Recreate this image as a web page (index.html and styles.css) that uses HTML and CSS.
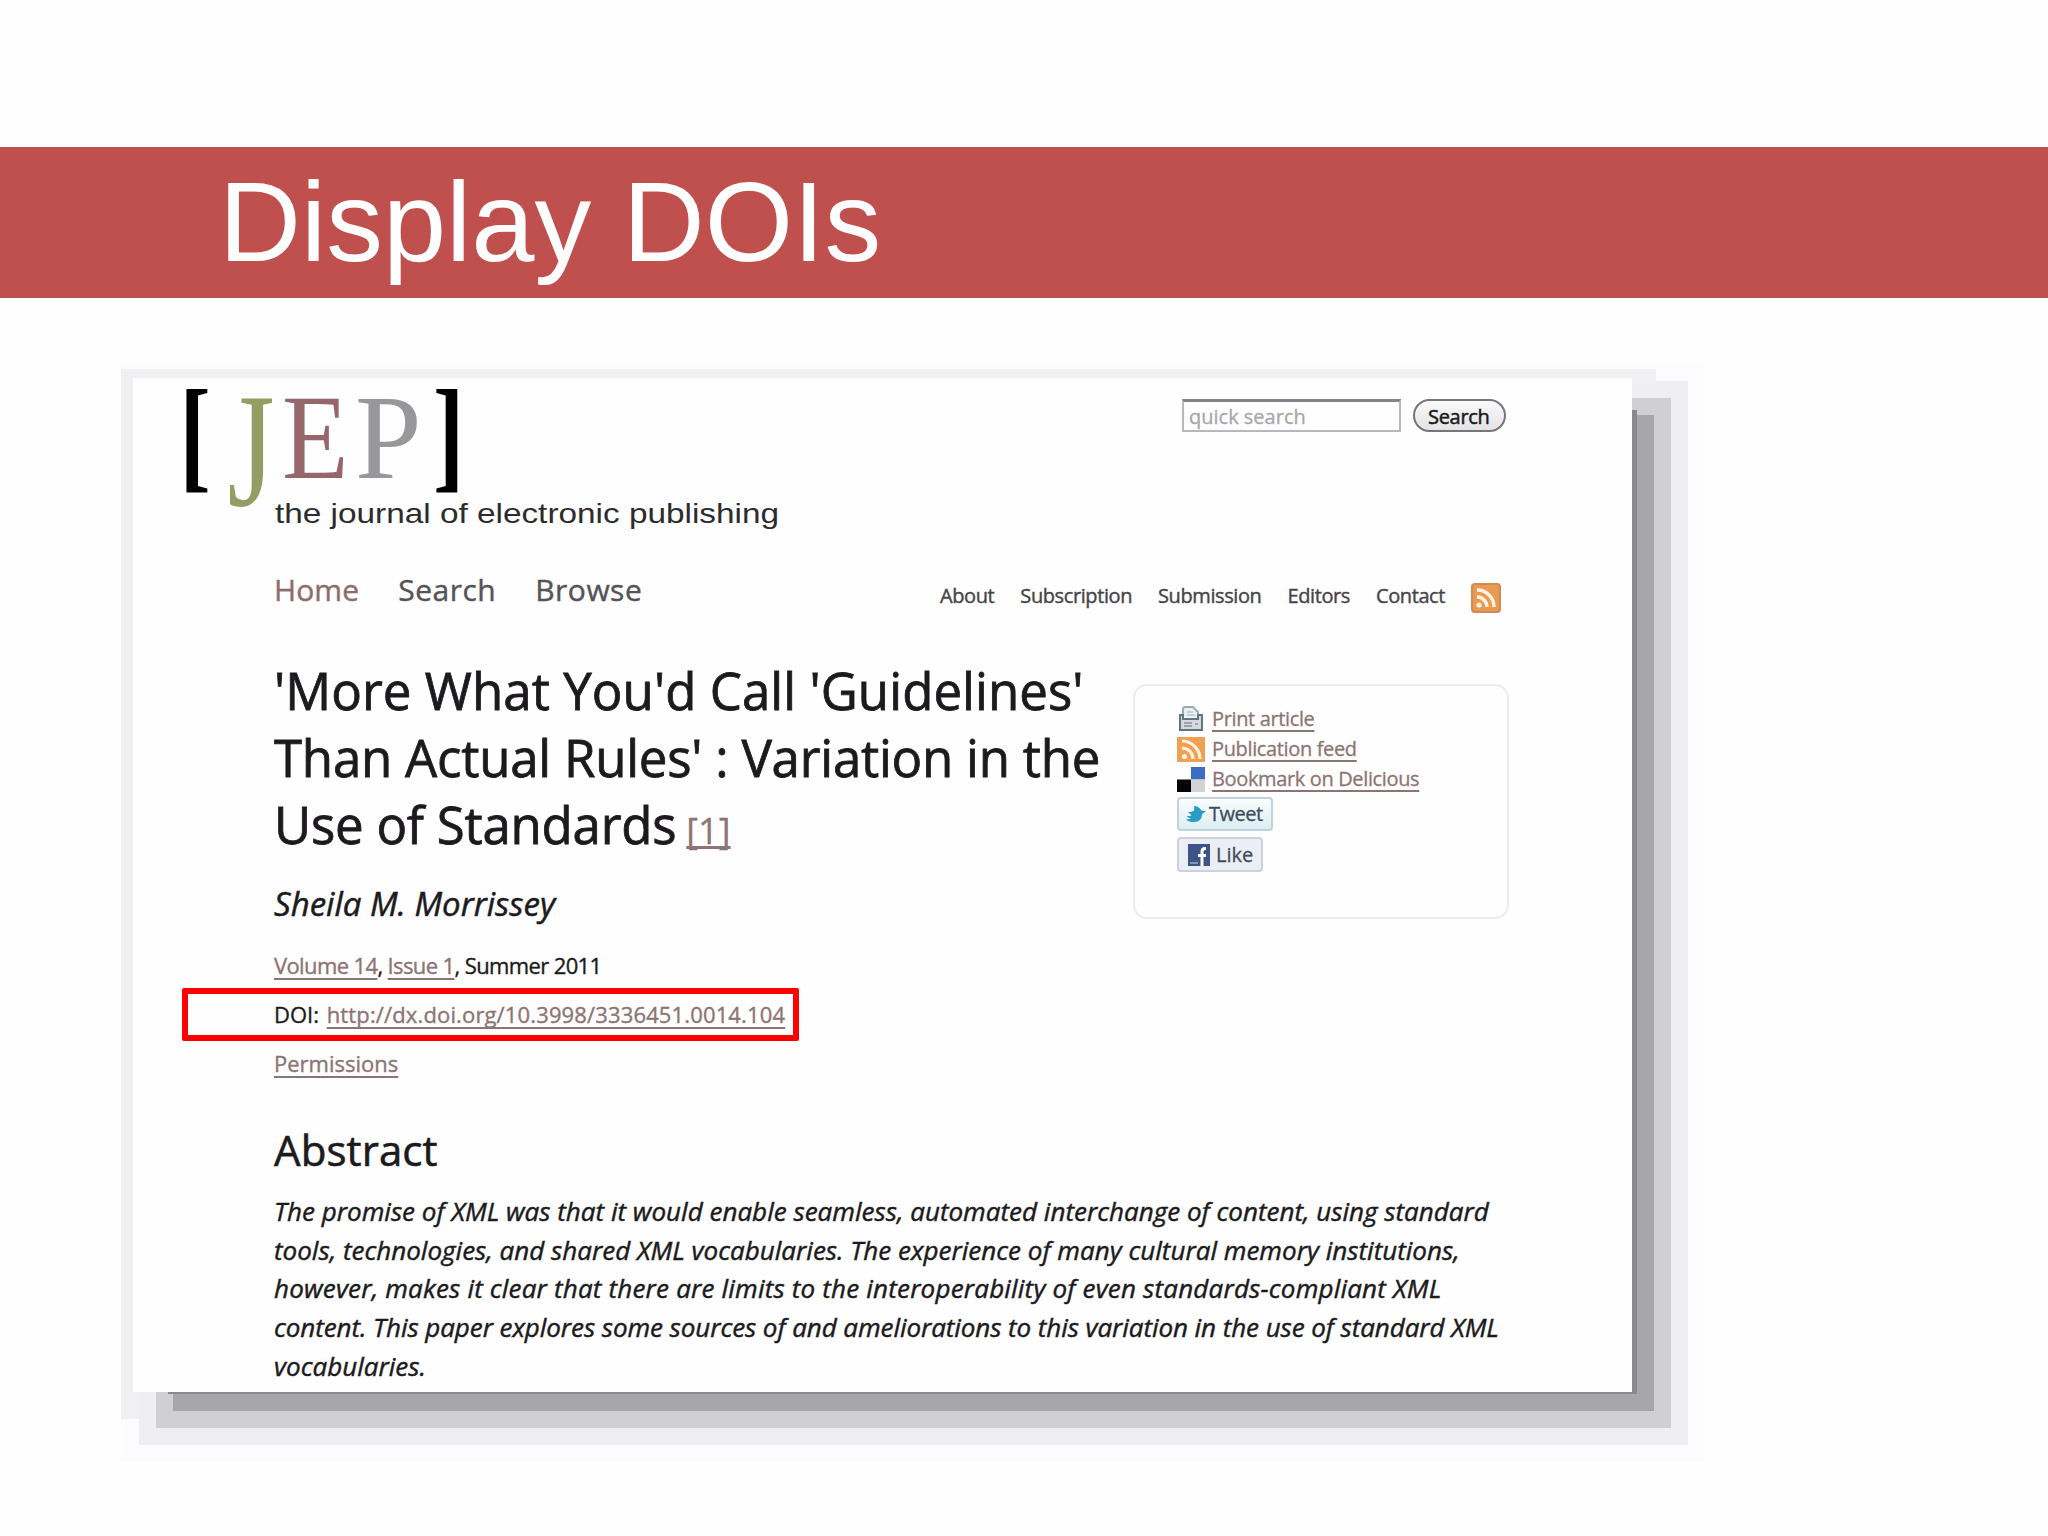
FILE: index.html
```html
<!DOCTYPE html>
<html lang="en">
<head>
<meta charset="utf-8">
<title>Display DOIs</title>
<link rel="stylesheet" href="styles.css">
</head>
<body>
<header class="banner"><h1>Display DOIs</h1></header>
<main class="card">
  <div class="top">
    <svg class="logo" width="610" height="160" viewBox="180 380 610 160" role="img">
      <g font-family="Liberation Serif, serif">
        <text transform="translate(179.500 475.500) scale(.75 1)" font-size="125" font-weight="700">[</text>
        <text transform="translate(433 475.500) scale(.75 1)" font-size="125" font-weight="700">]</text>
        <text transform="translate(227.500 505) scale(1 1.34)" font-size="121" fill="#939e64">J</text>
        <text transform="translate(282 478) scale(.9 1)" font-size="121" fill="#97666a">E</text>
        <text transform="translate(355 478) scale(.99 1)" font-size="121" fill="#98979a">P</text>
      </g>
      <text x="275" y="523" font-family="Liberation Sans, sans-serif" font-size="28" textLength="504" lengthAdjust="spacingAndGlyphs" fill="#2d2b2e">the journal of electronic publishing</text>
    </svg>
    <form class="search">
      <div class="field">quick search</div>
      <div class="button">Search</div>
    </form>
  </div>
  <nav class="nav">
    <div class="main-nav"><a class="home">Home</a><a>Search</a><a>Browse</a></div>
    <div class="sub-nav">
      <a>About</a><a>Subscription</a><a>Submission</a><a>Editors</a><a>Contact</a>
      <svg class="rss" width="30" height="30" viewBox="0 0 30 30"><rect x="1" y="1" width="28" height="28" rx="3" fill="#e99a50" stroke="#cf8a55" stroke-width="2"/><path d="M6 14a10 10 0 0 1 10 10M6 7a17 17 0 0 1 17 17" fill="none" stroke="#fff3e2" stroke-width="3.400"/><circle cx="8" cy="22" r="2.600" fill="#fff3e2"/></svg>
    </div>
  </nav>
  <div class="intro">
    <article>
      <h2>'More What You'd Call 'Guidelines'<br><span class="tight">Than Actual Rules' : Variation in the</span><br><span class="tight">Use of Standards</span><a class="note">[1]</a></h2>
      <p class="author">Sheila M. Morrissey</p>
      <p class="meta issue"><a>Volume 14</a>, <a>Issue 1</a>, Summer 2011</p>
      <p class="meta">DOI: <a class="doi">http://dx.doi.org/10.3998/3336451.0014.104</a></p>
      <p class="meta"><a>Permissions</a></p>
    </article>
    <aside class="share">
      <div class="row"><svg width="28" height="26" viewBox="-1 0 28 26"><path d="M5 11V3q0-2 2-2h8l5 5v6" fill="#e8f0f4" stroke="#9aabb4" stroke-width="2"/><path d="M9 6h6M9 9h8" stroke="#c3d3dc" stroke-width="2"/><path d="M2 9h3v4h15V9h4v15H2z" fill="#d3dadd" stroke="#62747e" stroke-width="2"/><path d="M6 17h8M6 20h8M17 18h3" stroke="#9aa5ab" stroke-width="2"/></svg><a>Print article</a></div>
      <div class="row"><svg width="28" height="26" viewBox="0 0 28 26"><rect y="1" width="28" height="25" fill="#efa052"/><path d="M5 12a11 11 0 0 1 11 11M5 5a18 18 0 0 1 18 18" fill="none" stroke="#fff1dc" stroke-width="3.200"/><circle cx="7.500" cy="20.500" r="2.600" fill="#fff1dc"/></svg><a>Publication feed</a></div>
      <div class="row"><svg width="28" height="25" viewBox="0 0 28 25"><path d="M14 0h14v12.500H14z" fill="#3c6dc4"/><path d="M0 12.500h14V25H0z" fill="#050507"/><path d="M14 12.500h14V25H14z" fill="#d2d1d3"/></svg><a>Bookmark on Delicious</a></div>
      <div class="chip tweet"><svg width="20" height="18" viewBox="0 0 22 20"><path d="M0 12q4 1 6-1L2 8q5 0 7-2L9 1q5 0 8 5l5 1-4 3q-1 9-9 9-6 0-9-3 3 0 5-1-3-1-5-3z" fill="#2a9cc8"/></svg>Tweet</div>
      <div class="chip like"><svg width="22" height="22" viewBox="0 0 22 22"><path d="M0 0h22v22H0z" fill="#3d5488"/><path d="M14 22v-9M18 4.500h-1q-3 0-3 3V13M10 11.500h8" fill="none" stroke="#fff" stroke-width="3"/><path d="M2 19h8" stroke="#8493b8" stroke-width="2"/></svg>Like</div>
    </aside>
  </div>
  <h3>Abstract</h3>
  <p class="abstract">The promise of XML was that it would enable seamless, automated interchange of content, using standard<br>tools, technologies, and shared XML vocabularies. The experience of many cultural memory institutions,<br><span class="loose">however, makes it clear that there are limits to the interoperability of even standards-compliant XML</span><br><span class="snug">content. This paper explores some sources of and ameliorations to this variation in the use of standard XML</span><br>vocabularies.</p>
  <div class="highlight"></div>
</main>
</body>
</html>
```
FILE: styles.css
```css
* { box-sizing: border-box; }
body { margin: 0; padding-top: 147px; width: 2048px; height: 1536px; overflow: hidden; background: #fefefe; font-family: "Open Sans", sans-serif; color: #1c1a1d; }
h1, h2, h3, p { margin: 0; font-weight: 400; }

.banner { height: 151px; padding-left: 219px; background: #c0504d; }
.banner h1 { font: 113.500px/150px "Liberation Sans", sans-serif; color: #fff; }

.card {
  position: relative;
  width: 1499px;
  height: 1014px;
  margin: 80px 0 0 133px;
  background: #fefefe;
  box-shadow:
    20px 17px 0 -15px #8a898c,
    31px 28px 0 -9px #a7a6a9,
    31px 28px 0 8px #d0cfd1,
    31px 28px 0 25px #efeef0,
    6px 9px 0 18px #f0eff1,
    30px 28px 0 42px #fcfbfd;
}

.top { display: flex; justify-content: space-between; height: 182px; padding: 2px 126px 0 47px; }
.logo { display: block; overflow: visible; }
.search { display: flex; gap: 12px; margin-top: 19px; }
.field { width: 219px; height: 33px; padding-left: 5px; border: 2px solid #b9b7bb; border-top: 3px solid #858387; font-size: 20px; line-height: 29px; color: #a8a6aa; -webkit-text-stroke: .3px; }
.button { width: 93px; height: 33px; padding-left: 13px; border: 2px solid #77757a; border-radius: 17px; background: linear-gradient(#fafafa, #e4e3e5); font-size: 20px; line-height: 31px; letter-spacing: -.3px; -webkit-text-stroke: .5px; }

.nav { display: flex; justify-content: space-between; height: 97px; padding: 10px 131px 0 141px; -webkit-text-stroke: .4px; }
.main-nav { display: flex; gap: 39px; font-size: 30px; line-height: 40px; letter-spacing: .5px; color: #555357; }
.home { letter-spacing: .1px; color: #8c6d6d; }
.sub-nav { display: flex; gap: 26px; margin-top: 11px; font-size: 20px; line-height: 30px; letter-spacing: -.4px; color: #464448; }
.rss { margin-top: 2px; }

.intro { display: flex; justify-content: space-between; height: 468px; padding: 0 123px 0 141px; }
h2 { height: 201px; font-size: 51px; line-height: 67px; letter-spacing: .06px; white-space: nowrap; -webkit-text-stroke: .8px; }
.tight { letter-spacing: -.24px; }
.note { margin-left: 10px; font-size: 36px; line-height: 1; color: #8c7474; text-decoration: underline; text-decoration-skip-ink: none; -webkit-text-stroke: .3px; }
.author { margin-top: 26px; font-size: 33px; line-height: 40px; font-style: italic; -webkit-text-stroke: .5px; }
.meta { font-size: 22px; line-height: 49px; white-space: nowrap; -webkit-text-stroke: .35px; }
.issue { margin-top: 17px; letter-spacing: -.62px; }
.meta a, .row a { color: #8c7474; text-decoration: underline; text-underline-offset: 4px; text-decoration-thickness: 2px; text-decoration-skip-ink: none; }
.doi { margin-left: 2px; letter-spacing: .14px; }

.share { width: 376px; height: 235px; margin-top: 27px; padding: 18px 0 0 42px; border: 2px solid #edebee; border-radius: 14px; -webkit-text-stroke: .3px; }
.row { display: flex; align-items: center; height: 30px; font-size: 20px; line-height: 30px; letter-spacing: -.36px; }
.row svg { margin-right: 7px; }
.chip { display: flex; align-items: center; border: 2px solid #c3d2da; border-radius: 4px; font-size: 20px; line-height: 28px; color: #3d4f5c; }
.tweet { width: 96px; height: 34px; margin-top: 3px; padding-left: 7px; letter-spacing: -.5px; background: linear-gradient(#fafdfe, #dceef4); }
.tweet svg { margin-right: 3px; }
.like { width: 86px; height: 35px; margin-top: 6px; padding-left: 9px; background: #eceef5; border-color: #cdd1dd; }
.like svg { margin-right: 6px; }

h3 { padding-left: 141px; font-size: 42px; line-height: 50px; letter-spacing: .1px; -webkit-text-stroke: .6px; }
.abstract { margin-top: 17px; padding-left: 141px; font-size: 26px; line-height: 38.700px; letter-spacing: .01px; font-style: italic; white-space: nowrap; -webkit-text-stroke: .45px; }
.loose { letter-spacing: .19px; }
.snug { letter-spacing: -.07px; }

/* red frame laid over the DOI line */
.highlight { position: absolute; left: 49px; top: 610px; width: 617px; height: 53px; border: 6px solid #fe0000; border-radius: 2px; }
```
